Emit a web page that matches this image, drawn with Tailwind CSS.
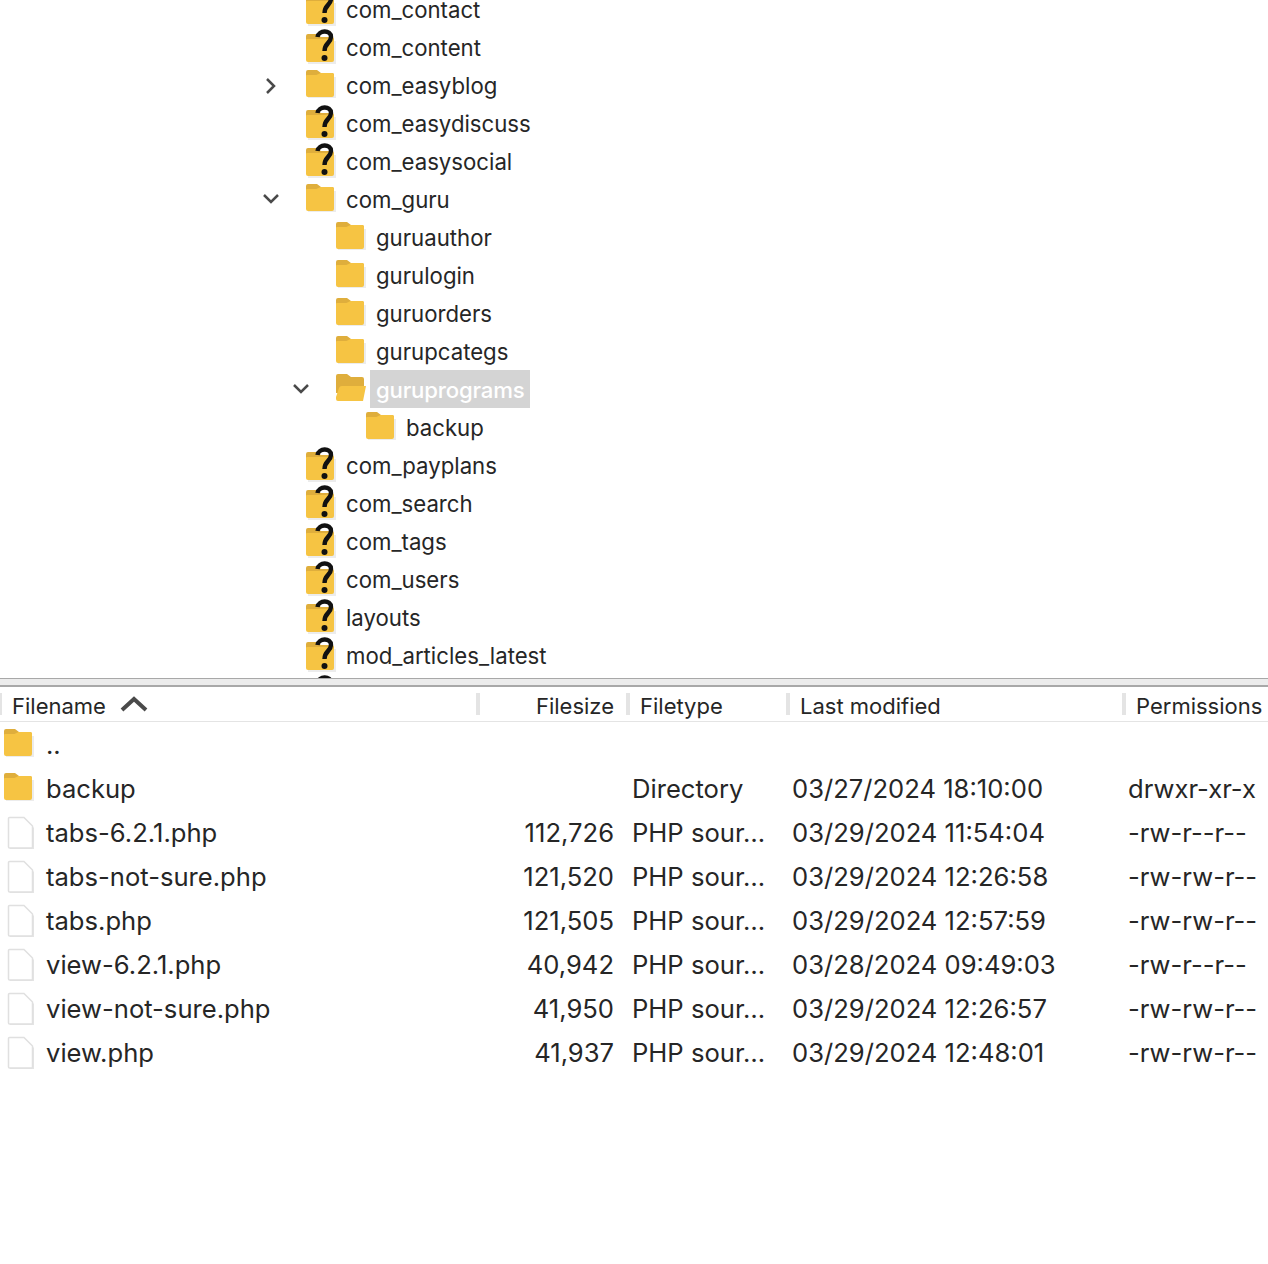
<!DOCTYPE html>
<html lang="en">
<head>
<meta charset="utf-8">
<title>guruprograms</title>
<script src="https://cdn.jsdelivr.net/npm/@tailwindcss/browser@4"></script>
</head>
<body class="bg-white font-['Inter','Liberation_Sans',sans-serif] text-[#262626] overflow-hidden">
<svg class="hidden">
  <defs>
    <symbol id="folder" viewBox="0 0 30 30">
      <path d="M2 8h28v21H2z" fill="#ececec"/>
      <path d="M0 3a2 2 0 0 1 2-2h9l4 3h11a2 2 0 0 1 2 2v6H0z" fill="#dfae3c"/>
      <path d="M0 7a1 1 0 0 1 1-1h9.500l4-2H26a2 2 0 0 1 2 2v20a2 2 0 0 1-2 2H2a2 2 0 0 1-2-2z" fill="#f6c443"/>
    </symbol>
    <symbol id="folder-open" viewBox="0 0 30 30">
      <path d="M0 3a2 2 0 0 1 2-2h9l4 3h11a2 2 0 0 1 2 2v6H0z" fill="#dfae3c"/>
      <path d="M0 6h28v14H0z" fill="#dfae3c"/>
      <path d="M6 13h24l-3 15H2a2 2 0 0 1-2-2v-2l3-9a3 3 0 0 1 3-2z" fill="#f6c443"/>
    </symbol>
    <symbol id="unknown" viewBox="0 0 30 38">
      <path d="M2 14h28v23H2z" fill="#ececec"/>
      <path d="M0 9a2 2 0 0 1 2-2h9l4 3h11a2 2 0 0 1 2 2v6H0z" fill="#dfae3c"/>
      <path d="M0 13a1 1 0 0 1 1-1h25a2 2 0 0 1 2 2v19a2 2 0 0 1-2 2H2a2 2 0 0 1-2-2z" fill="#f6c443"/>
      <path d="M11.500 10c1-7 13.500-7.500 13.500 0 0 6-6.500 6-6.500 14" fill="none" stroke="#111" stroke-width="4.400"/>
      <circle cx="18.500" cy="31" r="3" fill="#111"/>
    </symbol>
    <symbol id="file" viewBox="0 0 28 34">
      <path d="M3 3h15l9 9v21H3z" fill="#e4e4e4"/>
      <path d="M1.500 2.500a1 1 0 0 1 1-1H17l8.500 8.500v21a1 1 0 0 1-1 1h-22a1 1 0 0 1-1-1z" fill="#fff" stroke="#e0e0e0" stroke-width="1.500"/>
    </symbol>
  </defs>
</svg>

<!-- tree -->
<div class="h-[678px] overflow-hidden">
  <div class="-mt-[9px] text-[22.2px] leading-[40px]">
    <div class="flex h-[38px] items-center pl-[306px]"><svg class="w-[30px] h-[38px] -mt-1"><use href="#unknown"/></svg><span class="ml-[10px]">com_contact</span></div>
    <div class="flex h-[38px] items-center pl-[306px]"><svg class="w-[30px] h-[38px] -mt-1"><use href="#unknown"/></svg><span class="ml-[10px]">com_content</span></div>
    <div class="flex h-[38px] items-center pl-[264px]">
      <svg class="w-[14px] h-[18px] mr-[28px]" viewBox="0 0 14 18" fill="none" stroke="#4a4a4a" stroke-width="2.500"><path d="M3 2l7 7-7 7"/></svg>
      <svg class="w-[30px] h-[30px] -mt-1"><use href="#folder"/></svg><span class="ml-[10px]">com_easyblog</span>
    </div>
    <div class="flex h-[38px] items-center pl-[306px]"><svg class="w-[30px] h-[38px] -mt-1"><use href="#unknown"/></svg><span class="ml-[10px]">com_easydiscuss</span></div>
    <div class="flex h-[38px] items-center pl-[306px]"><svg class="w-[30px] h-[38px] -mt-1"><use href="#unknown"/></svg><span class="ml-[10px]">com_easysocial</span></div>
    <div class="flex h-[38px] items-center pl-[263px]">
      <svg class="w-[16px] h-[12px] mr-[27px] -mt-[2px]" viewBox="0 0 16 12" fill="none" stroke="#4a4a4a" stroke-width="2.500"><path d="M1 2l7 7 7-7"/></svg>
      <svg class="w-[30px] h-[30px] -mt-1"><use href="#folder"/></svg><span class="ml-[10px]">com_guru</span>
    </div>
    <div class="flex h-[38px] items-center pl-[336px]"><svg class="w-[30px] h-[30px] -mt-1"><use href="#folder"/></svg><span class="ml-[10px]">guruauthor</span></div>
    <div class="flex h-[38px] items-center pl-[336px]"><svg class="w-[30px] h-[30px] -mt-1"><use href="#folder"/></svg><span class="ml-[10px]">gurulogin</span></div>
    <div class="flex h-[38px] items-center pl-[336px]"><svg class="w-[30px] h-[30px] -mt-1"><use href="#folder"/></svg><span class="ml-[10px]">guruorders</span></div>
    <div class="flex h-[38px] items-center pl-[336px]"><svg class="w-[30px] h-[30px] -mt-1"><use href="#folder"/></svg><span class="ml-[10px]">gurupcategs</span></div>
    <div class="flex h-[38px] items-center pl-[293px]">
      <svg class="w-[16px] h-[12px] mr-[27px] -mt-[2px]" viewBox="0 0 16 12" fill="none" stroke="#4a4a4a" stroke-width="2.500"><path d="M1 2l7 7 7-7"/></svg>
      <svg class="w-[30px] h-[30px] -mt-1"><use href="#folder-open"/></svg><span class="ml-1 px-[6px] h-[38px] -mt-[2px] bg-[#d4d4d4] text-white font-medium tracking-[-0.2px]">guruprograms</span>
    </div>
    <div class="flex h-[38px] items-center pl-[366px]"><svg class="w-[30px] h-[30px] -mt-1"><use href="#folder"/></svg><span class="ml-[10px]">backup</span></div>
    <div class="flex h-[38px] items-center pl-[306px]"><svg class="w-[30px] h-[38px] -mt-1"><use href="#unknown"/></svg><span class="ml-[10px]">com_payplans</span></div>
    <div class="flex h-[38px] items-center pl-[306px]"><svg class="w-[30px] h-[38px] -mt-1"><use href="#unknown"/></svg><span class="ml-[10px]">com_search</span></div>
    <div class="flex h-[38px] items-center pl-[306px]"><svg class="w-[30px] h-[38px] -mt-1"><use href="#unknown"/></svg><span class="ml-[10px]">com_tags</span></div>
    <div class="flex h-[38px] items-center pl-[306px]"><svg class="w-[30px] h-[38px] -mt-1"><use href="#unknown"/></svg><span class="ml-[10px]">com_users</span></div>
    <div class="flex h-[38px] items-center pl-[306px]"><svg class="w-[30px] h-[38px] -mt-1"><use href="#unknown"/></svg><span class="ml-[10px]">layouts</span></div>
    <div class="flex h-[38px] items-center pl-[306px]"><svg class="w-[30px] h-[38px] -mt-1"><use href="#unknown"/></svg><span class="ml-[10px]">mod_articles_latest</span></div>
    <div class="flex h-[38px] items-center pl-[306px]"><svg class="w-[30px] h-[38px] -mt-1"><use href="#unknown"/></svg></div>
  </div>
</div>

<!-- splitter -->
<div class="h-[9px] bg-[#ececec] border-t border-[#a8a8a8] border-b-2"></div>

<!-- list header -->
<div class="grid grid-cols-[476px_150px_160px_336px_146px] h-[35px] border-b border-[#e4e4e4] text-[22px] items-center">
  <div class="flex items-center h-[22px] border-l-2 border-[#e4e4e4] pl-[10px] leading-[26px]"><span class="pt-1">Filename</span>
    <svg class="w-[28px] h-[18px] ml-[14px]" viewBox="0 0 28 18" fill="none" stroke="#4a4a4a" stroke-width="4"><path d="M2 15L14 4l12 11"/></svg>
  </div>
  <div class="h-[22px] leading-[26px] border-l-4 border-[#e4e4e4] text-right pr-[12px]">Filesize</div>
  <div class="h-[22px] leading-[26px] border-l-4 border-[#e4e4e4] pl-[10px]">Filetype</div>
  <div class="h-[22px] leading-[26px] border-l-4 border-[#e4e4e4] pl-[10px]">Last modified</div>
  <div class="h-[22px] leading-[26px] border-l-4 border-[#e4e4e4] pl-[10px] whitespace-nowrap">Permissions</div>
</div>

<!-- list rows -->
<div class="text-[25.6px]">
  <div class="grid grid-cols-[480px_134px_18px_160px_336px_140px] h-[44px] pt-[2px] items-center whitespace-nowrap">
    <div class="flex items-center pl-[4px]"><svg class="w-[30px] h-[30px] -mt-1"><use href="#folder"/></svg><span class="ml-[12px]">..</span></div>
  </div>
  <div class="grid grid-cols-[480px_134px_18px_160px_336px_140px] h-[44px] pt-[2px] items-center whitespace-nowrap">
    <div class="flex items-center pl-[4px]"><svg class="w-[30px] h-[30px] -mt-1"><use href="#folder"/></svg><span class="ml-[12px]">backup</span></div>
    <div></div><div></div><div>Directory</div><div>03/27/2024 18:10:00</div><div>drwxr-xr-x</div>
  </div>
  <div class="grid grid-cols-[480px_134px_18px_160px_336px_140px] h-[44px] pt-[2px] items-center whitespace-nowrap">
    <div class="flex items-center pl-[7px]"><svg class="w-[28px] h-[34px]"><use href="#file"/></svg><span class="ml-[11px]">tabs-6.2.1.php</span></div>
    <div class="text-right">112,726</div><div></div><div>PHP sour…</div><div>03/29/2024 11:54:04</div><div>-rw-r--r--</div>
  </div>
  <div class="grid grid-cols-[480px_134px_18px_160px_336px_140px] h-[44px] pt-[2px] items-center whitespace-nowrap">
    <div class="flex items-center pl-[7px]"><svg class="w-[28px] h-[34px]"><use href="#file"/></svg><span class="ml-[11px]">tabs-not-sure.php</span></div>
    <div class="text-right">121,520</div><div></div><div>PHP sour…</div><div>03/29/2024 12:26:58</div><div>-rw-rw-r--</div>
  </div>
  <div class="grid grid-cols-[480px_134px_18px_160px_336px_140px] h-[44px] pt-[2px] items-center whitespace-nowrap">
    <div class="flex items-center pl-[7px]"><svg class="w-[28px] h-[34px]"><use href="#file"/></svg><span class="ml-[11px]">tabs.php</span></div>
    <div class="text-right">121,505</div><div></div><div>PHP sour…</div><div>03/29/2024 12:57:59</div><div>-rw-rw-r--</div>
  </div>
  <div class="grid grid-cols-[480px_134px_18px_160px_336px_140px] h-[44px] pt-[2px] items-center whitespace-nowrap">
    <div class="flex items-center pl-[7px]"><svg class="w-[28px] h-[34px]"><use href="#file"/></svg><span class="ml-[11px]">view-6.2.1.php</span></div>
    <div class="text-right">40,942</div><div></div><div>PHP sour…</div><div>03/28/2024 09:49:03</div><div>-rw-r--r--</div>
  </div>
  <div class="grid grid-cols-[480px_134px_18px_160px_336px_140px] h-[44px] pt-[2px] items-center whitespace-nowrap">
    <div class="flex items-center pl-[7px]"><svg class="w-[28px] h-[34px]"><use href="#file"/></svg><span class="ml-[11px]">view-not-sure.php</span></div>
    <div class="text-right">41,950</div><div></div><div>PHP sour…</div><div>03/29/2024 12:26:57</div><div>-rw-rw-r--</div>
  </div>
  <div class="grid grid-cols-[480px_134px_18px_160px_336px_140px] h-[44px] pt-[2px] items-center whitespace-nowrap">
    <div class="flex items-center pl-[7px]"><svg class="w-[28px] h-[34px]"><use href="#file"/></svg><span class="ml-[11px]">view.php</span></div>
    <div class="text-right">41,937</div><div></div><div>PHP sour…</div><div>03/29/2024 12:48:01</div><div>-rw-rw-r--</div>
  </div>
</div>
</body>
</html>
